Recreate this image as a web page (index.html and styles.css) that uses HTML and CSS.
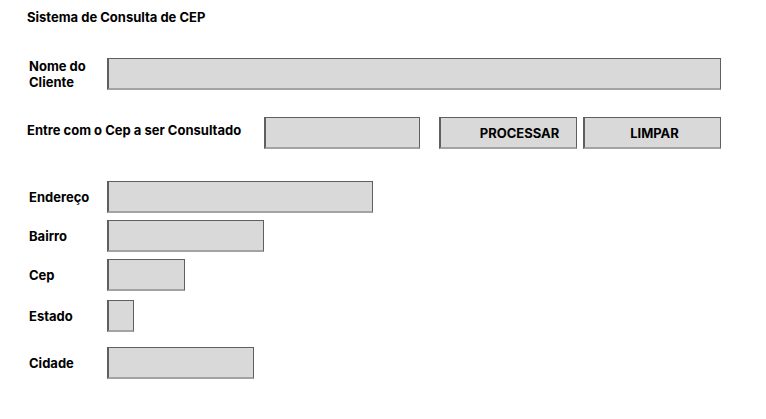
FILE: index.html
```html
<!DOCTYPE html>
<html lang="pt-BR">

<head>
    <meta charset="UTF-8">
    <meta name="viewport" content="width=device-width, initial-scale=1.0">
    <title>Sistema de Consulta de CEP</title>

    <link rel="stylesheet" href="styles.css">
</head>

<body>

    <main class="consulta">
        <h1 class="consulta--title">Sistema de Consulta de CEP</h1>

        <div class="row row--cliente">
            <label class="row--label" for="cliente">Nome do<br>Cliente</label>
            <input class="field field--cliente" id="cliente" type="text">
        </div>

        <div class="row row--busca">
            <label class="row--label row--label-wide" for="cep-busca">Entre com o Cep a ser Consultado</label>
            <input class="field field--busca" id="cep-busca" type="text">
            <button class="btn btn--processar" type="button">PROCESSAR</button>
            <button class="btn btn--limpar" type="button">LIMPAR</button>
        </div>

        <div class="resultado">
            <div class="row row--endereco">
                <label class="row--label" for="endereco">Endereço</label>
                <input class="field field--endereco" id="endereco" type="text">
            </div>
            <div class="row row--bairro">
                <label class="row--label" for="bairro">Bairro</label>
                <input class="field field--bairro" id="bairro" type="text">
            </div>
            <div class="row row--cep">
                <label class="row--label" for="cep">Cep</label>
                <input class="field field--cep" id="cep" type="text">
            </div>
            <div class="row row--estado">
                <label class="row--label" for="estado">Estado</label>
                <input class="field field--estado" id="estado" type="text">
            </div>
            <div class="row row--cidade">
                <label class="row--label" for="cidade">Cidade</label>
                <input class="field field--cidade" id="cidade" type="text">
            </div>
        </div>
    </main>

</body>

</html>
```

FILE: styles.css
```css
/* Variables */
:root {
    --color-field: #d9d9d9;
    --color-border: #5f5f5f;
    --color-border-light: #a3a3a3;
    --color-text: #000000;
}

/* Base */
body {
    margin: 0;
    background-color: #ffffff;
    font-family: Inter, "Liberation Sans", sans-serif;
    color: var(--color-text);
}

.consulta {
    padding: 9px 0 0 27px;
}

.consulta--title {
    margin: 0;
    font-size: 13px;
    line-height: 16px;
    font-weight: 700;
}

/* Rows */
.row {
    display: flex;
    align-items: center;
    height: 32px;
}

.row--label {
    width: 80px;
    flex: none;
    padding-left: 2px;
    box-sizing: border-box;
    font-size: 13px;
    line-height: 16px;
    font-weight: 700;
}

.row--cliente {
    margin-top: 33px;
}

.row--busca {
    margin-top: 27px;
}

.row--label-wide {
    width: 237px;
    padding-left: 0;
    margin-top: -6px;
}

.resultado {
    margin-top: 32px;
}

.row--bairro,
.row--cep {
    margin-top: 7px;
}

.row--estado {
    margin-top: 9px;
}

.row--cidade {
    margin-top: 15px;
}

/* Fields */
.field,
.btn {
    display: block;
    height: 32px;
    margin: 0;
    padding: 0;
    box-sizing: border-box;
    background-color: var(--color-field);
    border: 1px solid var(--color-border);
    border-left-width: 2px;
    border-bottom: 2px solid var(--color-border-light);
    border-radius: 0;
    font-family: inherit;
}

.field--cliente { width: 614px; }
.field--busca { width: 156px; }
.field--endereco { width: 266px; }
.field--bairro { width: 157px; }
.field--cep { width: 78px; }
.field--estado { width: 27px; }
.field--cidade { width: 147px; }

/* Buttons */
.btn {
    width: 138px;
    font-size: 13px;
    font-weight: 700;
    color: var(--color-text);
    text-align: center;
}

.btn--processar {
    margin-left: 19px;
    padding-left: 22px;
}

.btn--limpar {
    margin-left: 6px;
    padding-left: 4px;
}
```
